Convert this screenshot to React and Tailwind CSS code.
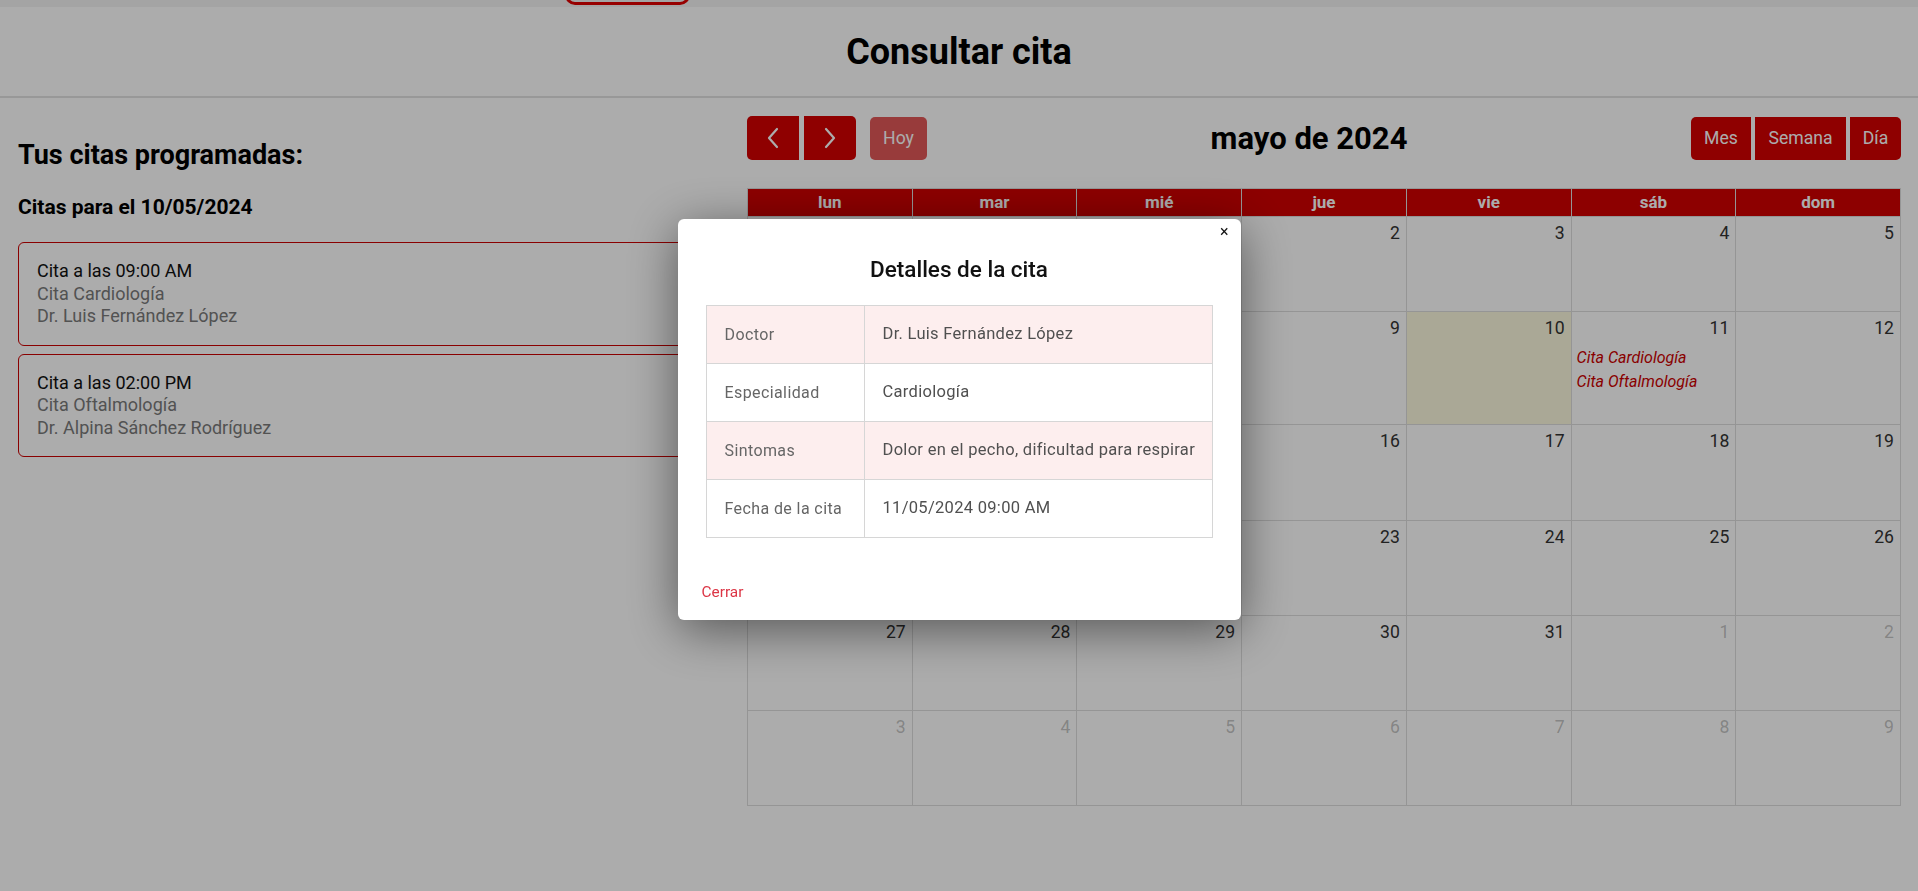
import React from 'react';

const weeks = [
    { h: 'h-[95px]', days: [[29, true], [30, true], [1], [2], [3], [4], [5]] },
    { h: 'h-[113px]', days: [[6], [7], [8], [9], [10], [11], [12]] },
    { h: 'h-[96px]', days: [[13], [14], [15], [16], [17], [18], [19]] },
    { h: 'h-[95px]', days: [[20], [21], [22], [23], [24], [25], [26]] },
    { h: 'h-[95px]', days: [[27], [28], [29], [30], [31], [1, true], [2, true]] },
    { h: 'h-[95px]', days: [[3, true], [4, true], [5, true], [6, true], [7, true], [8, true], [9, true]] },
];

const dayNames = ['lun', 'mar', 'mié', 'jue', 'vie', 'sáb', 'dom'];

const events = {
    11: ['Cita Cardiología', 'Cita Oftalmología'],
};

const citas = [
    { hora: '09:00 AM', titulo: 'Cita Cardiología', doctor: 'Dr. Luis Fernández López' },
    { hora: '02:00 PM', titulo: 'Cita Oftalmología', doctor: 'Dr. Alpina Sánchez Rodríguez' },
];

const detalles = [
    ['Doctor', 'Dr. Luis Fernández López'],
    ['Especialidad', 'Cardiología'],
    ['Sintomas', 'Dolor en el pecho, dificultad para respirar'],
    ['Fecha de la cita', '11/05/2024 09:00 AM'],
];

const Chevron = ({ left }) => (
    <svg width="16" height="24" viewBox="0 0 16 24" fill="none" stroke="white" strokeWidth="2.2" strokeLinecap="round" strokeLinejoin="round">
        {left ? <polyline points="12,3 4,12 12,21" /> : <polyline points="4,3 12,12 4,21" />}
    </svg>
);

const CitaCard = ({ cita }) => (
    <div className="border border-[#cc0000] rounded-[6px] px-[18px] py-[17px] text-[18px] leading-[22.5px] bg-white">
        <div className="text-[#111]">Cita a las {cita.hora}</div>
        <div className="text-[#7a7a7a]">{cita.titulo}</div>
        <div className="text-[#7a7a7a]">{cita.doctor}</div>
    </div>
);

const Calendar = () => (
    <div className="flex flex-col">
        <div className="flex items-center justify-between h-[44px]">
            <div className="flex items-center">
                <div className="flex gap-[5px]">
                    <button className="w-[52px] h-[44px] bg-[#d40000] rounded-l-[5px] flex items-center justify-center">
                        <Chevron left />
                    </button>
                    <button className="w-[52px] h-[44px] bg-[#d40000] rounded-r-[5px] flex items-center justify-center">
                        <Chevron />
                    </button>
                </div>
                <button className="ml-[14px] w-[57px] h-[43px] bg-[#d40000] opacity-65 rounded-[5px] text-white text-[17.6px]">
                    Hoy
                </button>
            </div>
            <h2 className="text-[31px] leading-[36px] mt-[2px] font-bold text-black">mayo de 2024</h2>
            <div className="flex gap-[4px] text-white text-[17.6px]">
                <button className="w-[60px] h-[43px] bg-[#d40000] rounded-l-[5px]">Mes</button>
                <button className="w-[91px] h-[43px] bg-[#d40000]">Semana</button>
                <button className="w-[51px] h-[43px] bg-[#d40000] rounded-r-[5px]">Día</button>
            </div>
        </div>
        <div className="mt-[28px] border-l border-t border-[#dddddd]">
            <div className="grid grid-cols-7 h-[28px] bg-[#d10000]">
                {dayNames.map((n) => (
                    <div key={n} className="border-r border-b border-[#dddddd] flex items-center justify-center text-white font-bold text-[17px]">
                        {n}
                    </div>
                ))}
            </div>
            {weeks.map((w, wi) => (
                <div key={wi} className={`grid grid-cols-7 ${w.h}`}>
                    {w.days.map(([d, other], di) => {
                        const isToday = wi === 1 && d === 10;
                        const ev = !other && events[d];
                        return (
                            <div
                                key={di}
                                className={`border-r border-b border-[#dddddd] flex flex-col ${isToday ? 'bg-[#fdf9de]' : 'bg-white'}`}
                            >
                                <div className={`text-right pr-[6px] pt-[4px] text-[17.6px] leading-[24px] ${other ? 'text-[#333333]/30' : 'text-[#333333]'}`}>
                                    {d}
                                </div>
                                {ev && (
                                    <div className="mt-[7px] pl-[5px] flex flex-col gap-[2px]">
                                        {ev.map((e) => (
                                            <div key={e} className="italic text-[16px] leading-[22px] text-[#cc0000]">{e}</div>
                                        ))}
                                    </div>
                                )}
                            </div>
                        );
                    })}
                </div>
            ))}
        </div>
    </div>
);

const Modal = () => (
    <div className="fixed inset-0 bg-black/[0.325] flex justify-center items-start pt-[219px]">
        <div className="relative w-[563px] bg-white rounded-[6px] shadow-[0_10px_50px_rgba(0,0,0,0.5)] px-[28px] pb-[17px]">
            <button className="absolute top-[3px] right-[12px] text-[16px] leading-[20px] text-[#111]">×</button>
            <h3 className="pt-[36px] text-center text-[22.5px] leading-[28px] font-medium text-[#111]">Detalles de la cita</h3>
            <table className="mt-[22px] w-full table-fixed border-collapse border border-[#d6d6d6]">
                <colgroup>
                    <col className="w-[158px]" />
                    <col />
                </colgroup>
                <tbody>
                    {detalles.map(([k, v], i) => (
                        <tr key={k} className={`h-[58px] ${i % 2 === 0 ? 'bg-[#fdeeee]' : 'bg-white'}`}>
                            <td className="border border-[#d6d6d6] px-[18px] text-[16px] tracking-[0.4px] text-[#666666] whitespace-nowrap">{k}</td>
                            <td className="border border-[#d6d6d6] pl-[18px] pr-[4px] text-[16.5px] tracking-[0.3px] text-[#505050] whitespace-nowrap">{v}</td>
                        </tr>
                    ))}
                </tbody>
            </table>
            <div className="mt-[43px] -ml-[4px] text-[15.4px] leading-[22px] text-[#dc3545]">Cerrar</div>
        </div>
    </div>
);

export default function App() {
    return (
        <div className="min-h-[891px] bg-white" style={{ fontFamily: 'Roboto, "Noto Sans", sans-serif' }}>
            <div className="h-[7px] overflow-hidden bg-[#f3f3f3]">
                <div className="ml-[565px] -mt-[20px] w-[125px] h-[25px] border-[3px] border-[#e00000] rounded-[10px]" />
            </div>
            <div className="h-[91px] flex items-center justify-center border-b-2 border-[#e2e2e2]">
                <h1 className="text-[36px] font-bold text-black">Consultar cita</h1>
            </div>
            <div className="flex pl-[18px] pr-[17px] pt-[18px] gap-[32px]">
                <div className="w-[697px] shrink-0">
                    <h2 className="mt-[23px] text-[27px] leading-[32px] font-bold text-black">Tus citas programadas:</h2>
                    <h3 className="mt-[24px] text-[21px] leading-[25px] font-bold text-black">Citas para el 10/05/2024</h3>
                    <div className="mt-[22px] flex flex-col gap-[8px]">
                        {citas.map((c) => (
                            <CitaCard key={c.hora} cita={c} />
                        ))}
                    </div>
                </div>
                <div className="flex-1">
                    <Calendar />
                </div>
            </div>
            <Modal />
        </div>
    );
}
